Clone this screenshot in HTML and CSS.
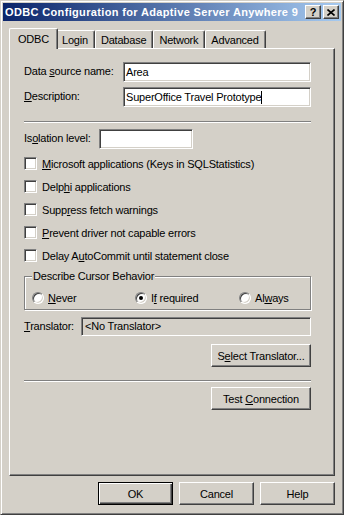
FILE: index.html
```html
<!DOCTYPE html>
<html lang="en">
<head>
    <meta charset="UTF-8">
    <title>ODBC Configuration for Adaptive Server Anywhere 9</title>
    <link rel="stylesheet" href="styles.css">
</head>
<body>
    <div class="window">
        <!-- Caption -->
        <div class="titlebar">
            <span class="title">ODBC Configuration for Adaptive Server Anywhere 9</span>
            <span class="caption-btn">?</span>
            <span class="caption-btn close">
                <svg width="8" height="7" viewBox="0 0 8 7"><path d="M0.5 0.5 L7.5 6.5 M7.5 0.5 L0.5 6.5" stroke="#000" stroke-width="1.6" fill="none"/></svg>
            </span>
        </div>

        <div class="dialog">
            <div class="tabs">
                <div class="tab active">ODBC</div>
                <div class="tab">Login</div>
                <div class="tab">Database</div>
                <div class="tab">Network</div>
                <div class="tab">Advanced</div>
            </div>

            <div class="panel">
                <div class="row">
                    <span class="label">Data <u>s</u>ource name:</span>
                    <div class="textbox">Area</div>
                </div>
                <div class="row">
                    <span class="label"><u>D</u>escription:</span>
                    <div class="textbox">SuperOffice Travel Prototype<span class="caret"></span></div>
                </div>

                <div class="sep"></div>

                <div class="row">
                    <span class="label short">Is<u>o</u>lation level:</span>
                    <div class="textbox small"></div>
                </div>

                <div class="checks">
                    <div class="check"><span class="checkbox"></span><span><u>M</u>icrosoft applications (Keys in SQLStatistics)</span></div>
                    <div class="check"><span class="checkbox"></span><span>Delp<u>h</u>i applications</span></div>
                    <div class="check"><span class="checkbox"></span><span>Supp<u>r</u>ess fetch warnings</span></div>
                    <div class="check"><span class="checkbox"></span><span><u>P</u>revent driver not capable errors</span></div>
                    <div class="check"><span class="checkbox"></span><span>Delay A<u>u</u>toCommit until statement close</span></div>
                </div>

                <div class="group">
                    <span class="group-title">Describe Cursor Behavior</span>
                    <div class="radios">
                        <div class="radio-opt"><span class="radio"></span><span><u>N</u>ever</span></div>
                        <div class="radio-opt"><span class="radio"><span class="dot"></span></span><span>I<u>f</u> required</span></div>
                        <div class="radio-opt"><span class="radio"></span><span>Al<u>w</u>ays</span></div>
                    </div>
                </div>

                <div class="row translator">
                    <span class="label tiny"><u>T</u>ranslator:</span>
                    <div class="textbox disabled">&lt;No Translator&gt;</div>
                </div>

                <div class="btn wide first"><span>S<u>e</u>lect Translator...</span></div>

                <div class="sep lower"></div>

                <div class="btn wide"><span>Test <u>C</u>onnection</span></div>
            </div>

            <div class="buttons">
                <div class="btn default">OK</div>
                <div class="btn">Cancel</div>
                <div class="btn">Help</div>
            </div>
        </div>
    </div>
</body>
</html>
```

FILE: styles.css
```css
:root {
    --face: #d4d0c8;
    --shadow: #808080;
    --dark: #404040;
    --light: #ffffff;
}

body {
    margin: 0;
    font-family: 'Liberation Sans', Arial, sans-serif;
    font-size: 11px;
    letter-spacing: -0.2px;
    color: #000;
    background: var(--face);
}

.window {
    width: 344px;
    height: 515px;
    box-sizing: border-box;
    background: var(--face);
    border: 1px solid;
    border-color: var(--face) var(--dark) var(--dark) var(--face);
    box-shadow: inset 1px 1px var(--light), inset -1px -1px var(--shadow);
    padding: 2px;
    display: flex;
    flex-direction: column;
}

/* caption bar */
.titlebar {
    height: 18px;
    display: flex;
    align-items: center;
    padding: 0 2px;
    background: linear-gradient(to right, #0a246a, #a6caf0);
    color: #fff;
    font-weight: bold;
}

.title {
    flex: 1;
    white-space: nowrap;
    overflow: hidden;
    letter-spacing: 0.35px;
}

.caption-btn {
    width: 16px;
    height: 14px;
    box-sizing: border-box;
    margin-left: 2px;
    background: var(--face);
    border: 1px solid;
    border-color: var(--light) var(--dark) var(--dark) var(--light);
    box-shadow: inset -1px -1px var(--shadow);
    color: #000;
    display: flex;
    align-items: center;
    justify-content: center;
    font-size: 11px;
    line-height: 12px;
    letter-spacing: 0;
}

/* dialog body */
.dialog {
    flex: 1;
    padding: 0 6px;
    display: flex;
    flex-direction: column;
}

.tabs {
    height: 27px;
    display: flex;
    align-items: flex-end;
    padding-left: 2px;
}

.tab {
    height: 18px;
    box-sizing: border-box;
    padding: 3px 6px 0 5px;
    line-height: 13px;
    border: 1px solid var(--light);
    border-bottom: 0;
    border-right-color: var(--dark);
    border-radius: 2px 2px 0 0;
    box-shadow: inset -1px 0 var(--shadow);
    background: var(--face);
}

.tab.active {
    height: 21px;
    margin: 0 -2px -1px;
    padding: 4px 8px 0;
    position: relative;
    z-index: 1;
}

.panel {
    height: 428px;
    box-sizing: border-box;
    border: 1px solid;
    border-color: var(--light) var(--dark) var(--dark) var(--light);
    box-shadow: inset -1px -1px var(--shadow);
    padding: 13px 23px 0 14px;
    display: flex;
    flex-direction: column;
}

.row {
    display: flex;
    align-items: center;
}

.row + .row {
    margin-top: 5px;
}

.label {
    width: 99px;
    flex: none;
    margin-top: -2px;
}

.label.short {
    width: 75px;
}

.label.tiny {
    width: 57px;
}

.textbox {
    flex: 1;
    height: 20px;
    box-sizing: border-box;
    background: #fff;
    border: 1px solid;
    border-color: var(--shadow) var(--light) var(--light) var(--shadow);
    box-shadow: inset 1px 1px var(--dark), inset -1px -1px var(--face);
    padding: 0 2px;
    line-height: 18px;
    white-space: nowrap;
}

.textbox.small {
    flex: none;
    width: 94px;
}

.textbox.disabled {
    background: var(--face);
    height: 19px;
    line-height: 17px;
    padding-left: 3px;
}

.caret {
    display: inline-block;
    width: 1px;
    height: 13px;
    background: #000;
    vertical-align: -3px;
}

.sep {
    border-top: 1px solid var(--shadow);
    border-bottom: 1px solid var(--light);
    margin: 14px 0 6px;
}

.sep.lower {
    margin: 13px 0 5px;
}

.checks {
    display: flex;
    flex-direction: column;
    gap: 10px;
    margin-top: 8px;
}

.check {
    display: flex;
    align-items: center;
    gap: 5px;
    height: 13px;
    white-space: nowrap;
}

.checkbox {
    width: 13px;
    height: 13px;
    flex: none;
    box-sizing: border-box;
    background: #fff;
    border: 1px solid;
    border-color: var(--shadow) var(--light) var(--light) var(--shadow);
    box-shadow: inset 1px 1px var(--dark), inset -1px -1px var(--face);
}

.group {
    position: relative;
    margin-top: 14px;
    border: 1px solid var(--shadow);
    box-shadow: inset 1px 1px var(--light), 1px 1px var(--light);
    padding: 15px 0 5px 7px;
}

.group-title {
    position: absolute;
    top: -7px;
    left: 7px;
    padding: 0 1px;
    line-height: 13px;
    background: var(--face);
}

.radios {
    display: grid;
    grid-template-columns: 103px 104px auto;
}

.radio-opt {
    display: flex;
    align-items: center;
    gap: 4px;
    height: 12px;
    white-space: nowrap;
}

.radio {
    width: 12px;
    height: 12px;
    flex: none;
    box-sizing: border-box;
    border-radius: 50%;
    background: #fff;
    border: 1px solid;
    border-color: var(--shadow) var(--light) var(--light) var(--shadow);
    box-shadow: inset 1px 1px var(--dark), inset -1px -1px var(--face);
    display: flex;
    align-items: center;
    justify-content: center;
}

.dot {
    width: 4px;
    height: 4px;
    border-radius: 50%;
    background: #000;
}

.translator {
    margin-top: 7px;
}

.btn {
    width: 75px;
    height: 23px;
    box-sizing: border-box;
    background: var(--face);
    border: 1px solid;
    border-color: var(--light) var(--dark) var(--dark) var(--light);
    box-shadow: inset -1px -1px var(--shadow);
    display: flex;
    align-items: center;
    justify-content: center;
    white-space: nowrap;
}

.btn.wide {
    width: 100px;
    align-self: flex-end;
}

.btn.first {
    margin-top: 8px;
}

.btn.default {
    border-color: #000;
    box-shadow: inset 1px 1px var(--light), inset -1px -1px var(--dark), inset -2px -2px var(--shadow);
}

.buttons {
    display: flex;
    justify-content: flex-end;
    gap: 6px;
    margin-top: 6px;
}
```
